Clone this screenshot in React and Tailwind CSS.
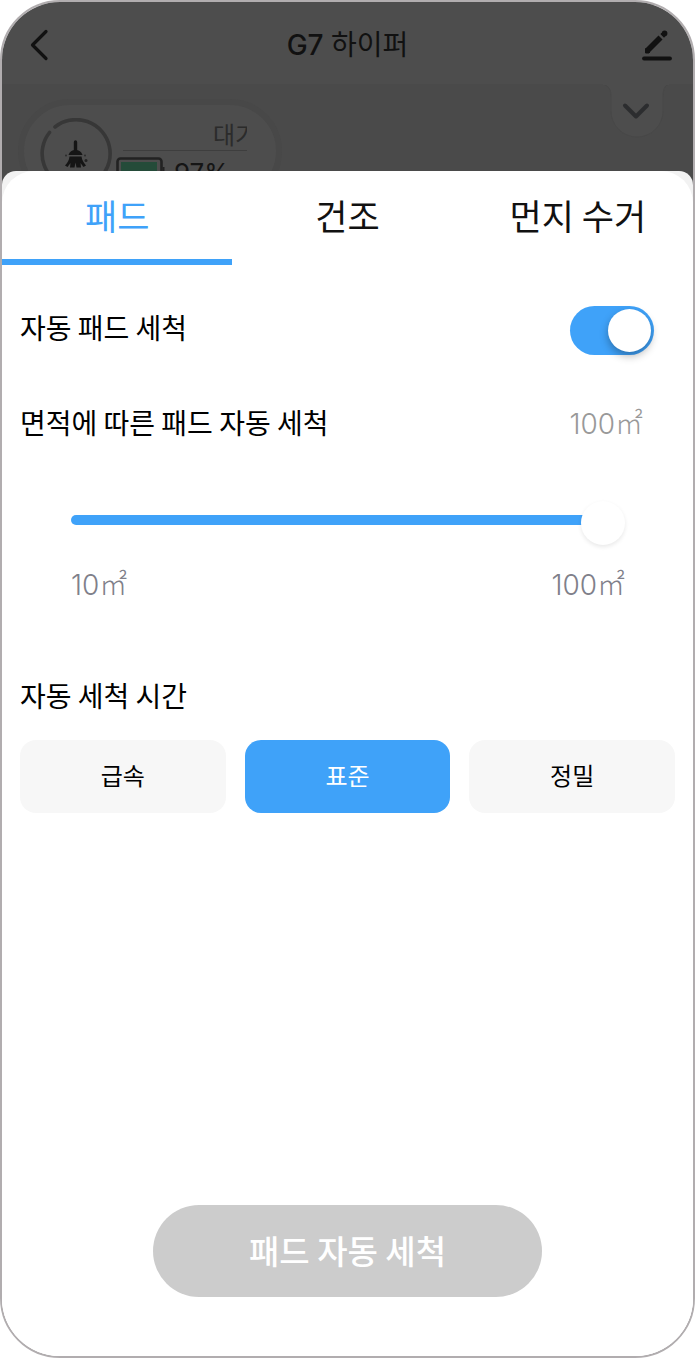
import React, { useState } from "react";

const TABS = ["패드", "건조", "먼지 수거"];
const MODES = ["급속", "표준", "정밀"];
const MIN_AREA = 10;
const MAX_AREA = 100;

function Header() {
    return (
        <header className="flex h-[82px] items-center justify-between bg-[#4d4d4d] pl-[26px] pr-5 pt-1">
            <button aria-label="뒤로" className="flex w-[26px] justify-start">
                <svg width="22" height="34" viewBox="0 0 22 34" fill="none" className="shrink-0">
                    <path
                        d="M18 3.500 4.500 17 18 30.500"
                        stroke="#111"
                        strokeWidth="3.200"
                        strokeLinecap="round"
                        strokeLinejoin="round"
                    />
                </svg>
            </button>
            <h1 className="font-['Inter','Noto_Sans_CJK_KR',sans-serif] text-[28px] font-medium leading-10 text-[#111]">
                G7 <span className="font-normal">하이퍼</span>
            </h1>
            <button aria-label="이름 수정" className="w-[32px]">
                <svg width="32" height="34" viewBox="0 0 32 34" fill="none">
                    <path d="M7 22 19.500 9.500" stroke="#111" strokeWidth="5.600" />
                    <path d="M5 20 9 24 8 25H4.500V21Z" fill="#111" stroke="#111" strokeLinejoin="round" />
                    <path d="M21.200 7.800 22.500 6.500" stroke="#111" strokeWidth="5.200" />
                    <circle cx="23.600" cy="5.400" r="2.800" fill="#111" />
                    <path d="M3 30.500h26" stroke="#111" strokeWidth="3.800" strokeLinecap="round" />
                </svg>
            </button>
        </header>
    );
}

function BroomIcon() {
    return (
        <svg width="72" height="72" viewBox="0 0 72 72" fill="none" className="shrink-0">
            {/* Progress ring, open at the upper left */}
            <path
                d="M15 9A34 34 0 1 1 9.500 14.500"
                stroke="#373737"
                strokeWidth="3.600"
                strokeLinecap="round"
            />
            {/* Broom */}
            <path d="M35.500 24v9" stroke="#151515" strokeWidth="3.400" strokeLinecap="round" />
            <path d="M28.500 37c1-3.500 3.500-5 7-5s6 1.500 7 5Z" fill="#151515" />
            <path
                d="M29.500 38.500h12c.5 4 2.500 6.500 4.500 9l-2.500 1.500-3-4 .5 4.500h-4.500l-1-5-1 5H30l.5-4.500-3 4L25 47.500c2.500-2.500 4-5 4.500-9Z"
                fill="#151515"
            />
            <circle cx="26" cy="37.500" r="1" fill="#2b2b2b" />
            <circle cx="45" cy="37.500" r="1" fill="#2b2b2b" />
            <circle cx="46" cy="42.500" r="1.500" fill="#222" />
        </svg>
    );
}

function DeviceStatus() {
    return (
        <section className="flex h-[87px] items-start justify-between overflow-hidden bg-[#4a4a4a] pl-4 pr-6">
            <div className="mt-[15px] flex h-[104px] w-[264px] rounded-full border-6 border-[#484848] bg-[#4d4d4d] pl-4 pt-[13px]">
                <BroomIcon />
                <div className="flex w-[140px] flex-col pl-1">
                    <div className="ml-[7px] h-[33px] w-[124px] overflow-hidden whitespace-nowrap border-b border-[#3e3e3e] pl-[90px] text-2xl leading-8 text-[#2b2b2b]">
                        대기
                    </div>
                    <div className="mt-[6px] flex items-start">
                        <svg width="50" height="26" viewBox="0 0 50 26" fill="none" className="shrink-0">
                            <rect x="1.500" y="1.500" width="44" height="23" rx="3" stroke="#222" strokeWidth="2.600" />
                            <path d="M46.500 10h2v6h-2z" fill="#222" />
                            <rect x="5" y="5" width="36" height="16" fill="#244b39" />
                        </svg>
                        <span className="pl-2 font-['Inter',sans-serif] text-[26px] leading-8 text-[#151515]">97%</span>
                    </div>
                </div>
            </div>
            <button aria-label="펼치기">
                <svg width="66" height="56" viewBox="0 0 66 56" fill="none">
                    <path
                        d="M0 0h66c-5 2-6 6-6 13v14a26 26 0 0 1-52 0V13C8 6 6 2 0 0Z"
                        fill="#4d4d4d"
                        stroke="#484848"
                    />
                    <path d="M0 0h66" stroke="#4d4d4d" strokeWidth="2" />
                    <path
                        d="m22 21.500 11 11 11-11"
                        stroke="#2c2d2f"
                        strokeWidth="4"
                        strokeLinecap="round"
                        strokeLinejoin="round"
                    />
                </svg>
            </button>
        </section>
    );
}

function Tabs({ active, onChange }) {
    return (
        <div role="tablist" className="grid grid-cols-3 rounded-t-[32px] bg-white">
            {TABS.map((tab) => (
                <button
                    key={tab}
                    role="tab"
                    aria-selected={tab === active}
                    className={
                        "h-[94px] border-b-6 text-[35px] leading-[48px] " +
                        (tab === active
                            ? "border-[#3fa2f9] text-[#3fa2f9]"
                            : "border-transparent text-[#111]")
                    }
                    onClick={() => onChange(tab)}
                >
                    {tab}
                </button>
            ))}
        </div>
    );
}

function AreaSlider({ value, onChange }) {
    const ratio = (value - MIN_AREA) / (MAX_AREA - MIN_AREA);
    const fill = `calc((100% - 44px) * ${ratio} + 22px)`;

    return (
        <div className="mt-[71px] pl-[51px] pr-[50px]">
            <input
                id="area"
                type="range"
                min={MIN_AREA}
                max={MAX_AREA}
                step={10}
                value={value}
                onChange={(e) => onChange(Number(e.target.value))}
                style={{ background: `linear-gradient(to right, #3fa2f9 ${fill}, transparent ${fill})` }}
                className="block h-[10px] w-full cursor-pointer appearance-none rounded-full [&::-webkit-slider-runnable-track]:h-[10px] [&::-webkit-slider-thumb]:mt-[-14px] [&::-webkit-slider-thumb]:size-11 [&::-webkit-slider-thumb]:appearance-none [&::-webkit-slider-thumb]:rounded-full [&::-webkit-slider-thumb]:bg-white [&::-webkit-slider-thumb]:shadow-[0_2px_4px_rgba(0,0,0,0.09)]"
            />
            <div className="mt-10 flex justify-between font-['Inter','Noto_Sans_CJK_KR',sans-serif] text-[28px] font-light leading-10 text-[#80808a]">
                <span>10㎡</span>
                <span>100㎡</span>
            </div>
        </div>
    );
}

export default function App() {
    const [tab, setTab] = useState("패드");
    const [autoWash, setAutoWash] = useState(true);
    const [area, setArea] = useState(100);
    const [mode, setMode] = useState("표준");

    return (
        <div className="flex min-h-screen flex-col overflow-hidden rounded-[60px] border-2 border-[#b1adaf] bg-white font-['Noto_Sans_CJK_KR',sans-serif] text-black">
            <Header />
            <DeviceStatus />

            <div className="flex flex-1 flex-col bg-[linear-gradient(#4a4a4a_40px,white_40px)]">
                <main className="flex flex-1 flex-col rounded-t-[14px] bg-[linear-gradient(#f2f2f2_40px,white_40px)]">
                    <Tabs active={tab} onChange={setTab} />

                    <div className="px-[18px]">
                        {/* Auto wash toggle */}
                        <div className="mt-[41px] flex items-center justify-between pr-[21px]">
                            <label htmlFor="auto-wash" className="pb-2 text-[28px] leading-10">
                                자동 패드 세척
                            </label>
                            <input
                                id="auto-wash"
                                type="checkbox"
                                role="switch"
                                checked={autoWash}
                                onChange={(e) => setAutoWash(e.target.checked)}
                                className="flex h-[49px] w-[84px] cursor-pointer appearance-none items-center rounded-full bg-gray-300 px-[3px] before:size-[43px] before:rounded-full before:bg-white before:shadow-[0_4px_8px_rgba(0,0,0,0.3)] checked:justify-end checked:bg-[#3fa2f9]"
                            />
                        </div>

                        {/* Wash by area */}
                        <div className="mt-[47px] flex items-baseline justify-between pr-[32px] text-[28px] leading-10">
                            <label htmlFor="area">면적에 따른 패드 자동 세척</label>
                            <span className="font-['Inter','Noto_Sans_CJK_KR',sans-serif] font-light text-[#999]">
                                {area}㎡
                            </span>
                        </div>
                        <AreaSlider value={area} onChange={setArea} />

                        {/* Wash time */}
                        <h2 className="mt-[70px] text-[28px] leading-10">자동 세척 시간</h2>
                        <div className="mt-[25px] grid grid-cols-3 gap-[19px]">
                            {MODES.map((m) => (
                                <button
                                    key={m}
                                    aria-pressed={m === mode}
                                    className={
                                        "h-[73px] rounded-2xl pb-1 text-2xl " +
                                        (m === mode ? "bg-[#3fa2f9] text-white" : "bg-[#f7f7f7]")
                                    }
                                    onClick={() => setMode(m)}
                                >
                                    {m}
                                </button>
                            ))}
                        </div>
                    </div>

                    <button className="mx-auto mb-[59px] mt-auto h-[92px] rounded-full bg-[#ccc] px-24 text-[33px] font-medium text-white">
                        패드 자동 세척
                    </button>
                </main>
            </div>
        </div>
    );
}
